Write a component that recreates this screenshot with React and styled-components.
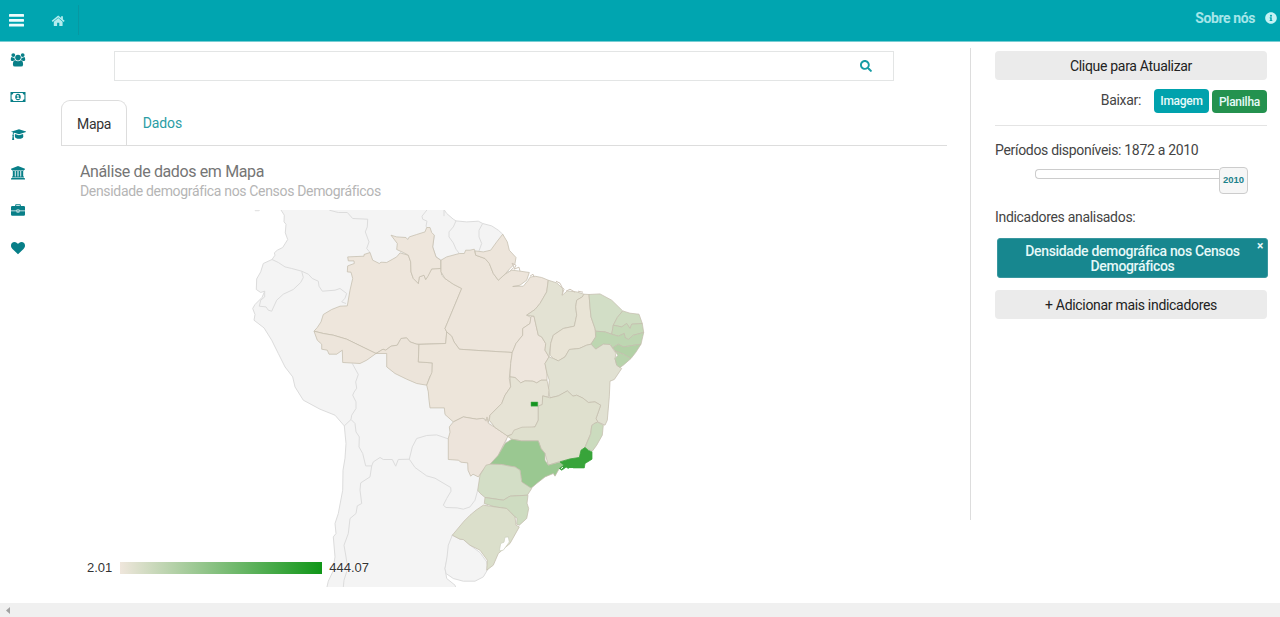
import React from 'react';
import styled, { createGlobalStyle } from 'styled-components';
import { FaInfoCircle, FaSearch } from 'react-icons/fa';

const GlobalStyle = createGlobalStyle`
  * { box-sizing: border-box; }
  body { margin: 0; background: #fff; font-family: Roboto, "Liberation Sans", sans-serif; font-size: 14px; letter-spacing: -0.31px; color: #444; overflow: hidden; }
  svg { display: block; }
`;

const Page = styled.div`
  height: 617px;
  display: flex;
  flex-direction: column;
`;
const Header = styled.header`
  height: 42px;
  flex: none;
  display: flex;
  align-items: flex-start;
  background: #00a5b0;
  border-bottom: 1px solid #79cdd3;
  color: #b4ecee;
`;
const MenuButton = styled.div`
  padding: 12px 0 0 8px;
  width: 50px;
  color: #effcfc;
`;
const HomeLink = styled.div`
  height: 30px;
  margin-top: 5px;
  padding-top: 8px;
  width: 29px;
  border-right: 1px solid #0798a2;
`;
const About = styled.div`
  margin-left: auto;
  display: flex;
  gap: 10px;
  padding: 10px 3px 0 0;
  font-weight: 700;
  line-height: 16px;
  letter-spacing: -0.4px;
  color: #a5e5e9;
  svg { margin-top: 2px; color: #c5f2f4; }
`;
const Body = styled.div`
  flex: 1;
  display: flex;
  min-height: 0;
`;
const Sidebar = styled.nav`
  width: 62px;
  flex: none;
  padding: 0 0 0 3px;
  margin-top: -1px;
  color: #087f88;
`;
const NavItem = styled.div`
  width: 30px;
  height: 37.6px;
  display: flex;
  align-items: center;
  justify-content: center;
`;
const Main = styled.main`
  width: 885px;
  flex: none;
  padding-top: 9px;
`;
const SearchBox = styled.div`
  margin: 0 53px 0 52px;
  height: 30px;
  border: 1px solid #e3e5e5;
  display: flex;
  align-items: center;
  justify-content: flex-end;
  padding-right: 21px;
  color: #159ca4;
`;
const Tabs = styled.div`
  display: flex;
  height: 46px;
  margin: 19px 0 0 -1px;
  border-bottom: 1px solid #ddd;
`;
const Tab = styled.div`
  height: 46px;
  line-height: ${(p) => (p.$active ? '46px' : '44px')};
  padding: 0 ${(p) => (p.$active ? '15px' : '14.5px')};
  letter-spacing: ${(p) => (p.$active ? '-0.3px' : '-0.1px')};
  color: ${(p) => (p.$active ? '#333' : '#2b9da5')};
  border: 1px solid ${(p) => (p.$active ? '#ddd' : 'transparent')};
  border-bottom: 0;
  border-radius: 9px 9px 0 0;
`;
const ChartTitle = styled.h1`
  margin: 16px 0 0 18px;
  font-size: 16px;
  font-weight: 400;
  line-height: 20px;
  letter-spacing: -0.37px;
  color: #757575;
`;
const ChartSubtitle = styled.h2`
  margin: 0 0 0 18px;
  font-size: 14px;
  font-weight: 400;
  line-height: 18px;
  letter-spacing: -0.33px;
  color: #b5b5b5;
`;
const MapArea = styled.div`
  margin-top: 10px;
  height: 377px;
  display: grid;
  > * { grid-area: 1 / 1; }
`;
const Legend = styled.div`
  align-self: end;
  justify-self: start;
  display: flex;
  align-items: center;
  gap: 7.5px;
  padding: 0 0 12px 25px;
  font: 13px/14px "Liberation Sans", Arial, sans-serif;
  letter-spacing: 0;
  color: #333;
  span { text-shadow: 0 0 2px #fff, 0 0 2px #fff; }
`;
const Gradient = styled.div`
  width: 202px;
  height: 12px;
  background: linear-gradient(90deg, #efe6dc, #109618);
`;
const Divider = styled.div`
  flex: none;
  width: 1px;
  height: 472px;
  margin: 6px 24px 0 23px;
  background: #ddd;
`;
const Panel = styled.aside`
  width: 272px;
  flex: none;
  padding-top: 9px;
`;
const WideButton = styled.div`
  height: 29px;
  border-radius: 4px;
  background: #ebebeb;
  color: #222;
  line-height: 30px;
  text-align: center;
`;
const Downloads = styled.div`
  display: flex;
  align-items: flex-start;
  justify-content: flex-end;
  height: 46px;
  padding-top: 9px;
  border-bottom: 1px solid #e4e4e4;
`;
const DownloadLabel = styled.span`
  line-height: 22px;
  margin-right: 13px;
`;
const SmallButton = styled.span`
  width: 55px;
  height: ${(p) => (p.$green ? '23px' : '24px')};
  margin: ${(p) => (p.$green ? '1px 0 0 3px' : '0')};
  border-radius: 4px;
  background: ${(p) => (p.$green ? '#24924f' : '#00a2ad')};
  color: #e8fafa;
  font-size: 12px;
  font-weight: 500;
  letter-spacing: -0.25px;
  line-height: 25px;
  text-align: center;
`;
const Label = styled.div`
  line-height: 18px;
  margin-top: ${(p) => p.$top}px;
`;
const Slider = styled.div`
  display: flex;
  align-items: flex-start;
  margin: 8px 19px 0 40px;
  height: 27px;
`;
const Track = styled.div`
  flex: 1;
  height: 10px;
  margin-top: 2px;
  border: 1px solid #ccc;
  border-right: 0;
  border-radius: 4px 0 0 4px;
`;
const Handle = styled.div`
  width: 29px;
  height: 27px;
  border: 1px solid #ccc;
  border-radius: 4px;
  background: #f6f6f6;
  font: bold 9.5px/24px "Liberation Sans", Arial, sans-serif;
  letter-spacing: 0;
  color: #1c828b;
  text-align: center;
`;
const Indicator = styled.div`
  position: relative;
  width: 271px;
  height: 40px;
  margin: 12px 0 12px 2px;
  padding: 5px 20px;
  border: 1px solid #38979f;
  border-radius: 3px;
  background: #17878f;
  color: #e6f8f8;
  font-weight: 500;
  line-height: 15px;
  letter-spacing: -0.34px;
  text-align: center;
`;
const Close = styled.span`
  position: absolute;
  top: 1px;
  right: 4px;
  font-size: 12px;
  font-weight: 700;
  line-height: 12px;
`;
const Scrollbar = styled.div`
  height: 14px;
  flex: none;
  padding: 4px 6px;
  background: #f0f0f0;
  color: #a2a2a2;
`;

const CONTINENT = `M280.7 209.3L284.3 215 284 221.7 286 224 285.3 232.7 287.7 239.3 282.7 247.3 277.3 250 274.3 252.7 275 255 272 259.3 263.3 263.3 260.7 271.7 256.7 278.7 256.3 289.3 260.7 292.3 264.7 291 262 297.3 255 304.3 252.7 308.3 255 314.3 254 320 264 327.7 271.7 340 278.3 353.3 285 366.7 292.7 376.7 295 386.7 303.3 400 320 409 335 415 344.3 425.7 346 443.3 345 458 343 470 342.7 490 338.3 513.3 335 523.3 336 533.3 333.3 536.7 335 556.7 332.7 571.7 328.3 581 326.7 588 456 588 455 585 446.7 578.3 445 568.3 452.3 535 480 520 500 480 520 350 502.7 234 498.3 230 491.7 225.7 482.7 223.3 478.3 221 466.7 221.7 456 220.7 453.3 219 446.7 213.3 444 209.3 444 205 280 205Z`;

const BORDERS = [
  'M329.3 210L338.3 212.3 347.3 212.3 352.7 218.3 367.7 219 367.3 226.7 365.3 231.7 369 241.7 366.7 248.3 370 252.3',
  'M427.3 209.3L422 216 422.7 219 427 221 426 226 428 228',
  'M434.3 235L432.7 246.7 436 256.7 441 260',
  'M444 208L444 216',
  'M456 220.7L453.3 226.7 449 231.7 449 236.7 453.3 242.7 456 249 459.3 253.3',
  'M482.7 223.3L479 230 479 236.7 481.7 243.3 479 250.7',
  'M272 259.3L278.3 262.3 285 266.7 291.7 268.3 301.7 271 303.3 277.3 300.7 282.3 293.3 289.3 283.3 294 276.7 300 271.7 311 268.3 310 266 306.7 259.3 306 260.7 300 264.7 296.7 264.7 291',
  'M301.7 271L308.3 274 312.3 278.3 318.3 281 319 286 322.3 291 335 290 340 288.3 346.7 293.3 345 298 341.7 301.7 346 303.3',
  'M352.3 363.3L358.3 374.3 355.7 381.7 356.7 388 354 392 352.7 395 356 401.7 356 408.3 351.7 415 351 419.3 344.3 425.7',
  'M351 419.3L355 423.3 356 431.7 359.3 436.7 359 446.7 362.7 453.3 365.7 465.7 371.7 465.7 373.3 461.7 380 457.3 383.3 459.3 392.3 459.3 395.7 466 398.3 459.3 409.3 459 412.3 446.7 416.7 438.3 426.7 435.3 436.7 434.7 448.3 438.7',
  'M409.3 459L415 467.3 426.7 475.7 435 478 450.7 487.3 451 491 446.7 498.3 443.3 505 446 507.3 457.3 507.7 463.3 509 470 506.7 475 500 477.7 490',
  'M371.7 465.7L370 476.7 360.7 482.7 360 490 361.7 503.3 357.3 505.7 356 513.3 350 518.3 348.3 533.3 344 545 346 556.7 347.7 568.3 344 580 343.3 587',
];

const URUGUAY = 'M452.3 535L448.3 545 447 557 445 568.3 446 573.3 453.3 578.3 463.3 581 475 581 483.3 576.7 488.3 568.3 486.7 561.7 480 552.3 470 545 463.3 539.3 460 539Z';

const STATES = [
  { id: 'AM', fill: '#eee6dc', d: 'M347.7 256.7L364 256 364 254.3 370 252.3 372.7 260 379.3 263.3 381 262 386.7 262.3 396.7 256.7 400 252.7 408.3 255 410.7 261.7 411 271.7 413.3 278.3 418.3 283.3 419.3 276.7 424 275 425.7 279.3 431.7 268.7 440.7 268.3 441.7 275 445 278.3 453.3 284 461.7 288.3 445 328.3 446.7 331.7 445.7 343.3 416.7 344 410 341.7 406.7 337.7 401 338.3 397.3 345 391 346 385.7 350 383 349 376 353.3 346.7 339 333.3 335 323.3 333.3 314 331 317.3 327.3 321 321.7 323.3 314.3 331.7 309.3 340 306 347.3 305.7 350 290 352.7 278.3 351 272 347.3 271.7 347.7 265.7 354.3 263.3 354 260.7 348.3 260.7Z' },
  { id: 'RR', fill: '#eee6dc', d: 'M391 235L396.7 236.7 406 237.3 407.7 239.3 409.3 236.7 416.7 234.3 425 231.7 426.7 227.3 430 227.3 431.7 232.3 434.3 235 432.7 246.7 436 256.7 440.7 260 440.7 268.3 431.7 268.7 428 276 425.7 279.3 424 275 419.3 276.7 418.3 283.3 413.3 278.3 411 271.7 410.7 261.7 408.3 255 403.3 252.3 396.7 249.3 397.3 243.3Z' },
  { id: 'PA', fill: '#ede5db', d: 'M441 260L446.7 256.7 459.3 253.3 464.3 253.3 465.7 250 470 250 474.3 249 475.7 255 485 258.3 489.3 263.3 493.3 273.3 498.3 280 505 274 511.7 270 518.3 270.7 529.3 272.3 526.7 280 520 285 512.7 286.3 523.3 286 528.3 280 530 277 535 276 541.7 277.3 548.3 280 546.7 291.7 540 303.3 535 309.3 526.7 315 531 317.3 530 323.3 522.7 328.3 522.7 335 516 343.3 512.3 352.3 473.3 350 459.3 349 454 341.7 451.7 336 446.7 331.7 445 328.3 461.7 288.3 453.3 284 445 278.3 441 271.7Z' },
  { id: 'AP', fill: '#ede5db', d: 'M475 250.7L483.3 251.7 490.7 250 496.7 241.7 502.7 234 507.3 241.7 509.3 250 516 257.3 515 263.3 510 268.3 505 274 498.3 280 493.3 273.3 489.3 263.3 485 258.3 475.7 255Z' },
  { id: 'AC', fill: '#ede5db', d: 'M314 331L317.3 340 321.7 344 321.7 349 327.3 350 329 354 336.7 354 342.3 350 342.7 362.3 360 363.3 366.7 360 376 353.3 346.7 339 333.3 335 323.3 333.3Z' },
  { id: 'RO', fill: '#ece4da', d: 'M376 353.3L386.7 353.3 386.7 366.7 395 373.3 406.7 379 416.7 383.3 426.7 385 430 376 432.3 373.3 432.3 362.7 418.3 361.7 419 344.3 416.7 344 410 341.7 406.7 337.7 401 338.3 397.3 345 391 346 385.7 350 383 349Z' },
  { id: 'MT', fill: '#ede5da', d: 'M419 344.3L418.3 361.7 432.3 362.7 432 372 430 376.7 426.7 385 428.3 391.7 429 400 430 407.7 444.3 407.7 445 414.3 453.3 421.7 463.3 416.7 476.7 419 484.3 418.3 486.7 420.7 488.3 422 490 415 501.7 403.3 505 395 510.7 386.7 509.3 378.3 510.7 363.3 512.3 352.3 473.3 350 459.3 349 454 341.7 451.7 336 446.7 331.7 445.7 343.3Z' },
  { id: 'MS', fill: '#ede4db', d: 'M453.3 421.7L449.3 426.7 450 432 448.3 438.3 448.3 459.3 458.3 460 461 462 467.7 462.7 468 470 470.7 476 473 474 478.3 476.7 483.3 469.3 490 464.3 498 456 501.7 448 508 436 495 427.3 488.3 423 487 416.7 486 421 483 418 476.7 419 463.3 416.7Z' },
  { id: 'TO', fill: '#eee6dd', d: 'M531 316L534 316 536 325 538.3 335 541.7 336.7 545.7 343.3 545 350 549 356.7 545 363.3 547 373.3 547 380 541 380 536.7 382.7 533 381 525 380.7 520.7 382.7 515 377.3 510 376.7 510.7 363.3 512.3 352.3 516 343.3 522.7 335 522.7 328.3 530 323.3Z' },
  { id: 'MA', fill: '#e3e2d3', d: 'M548.3 280L556.7 282.7 562.7 288.3 562.3 295 567.3 290.7 576.7 291.7 584 294 582.3 296.7 576.7 300 575.7 306.7 576.7 315 574.3 326 563.3 328.3 553.3 335 550.7 343.3 549 356.7 545 350 545.7 343.3 541.7 336.7 538.3 335 536 325 534 316 526.7 315 535 309.3 540 303.3 546.7 291.7Z' },
  { id: 'PI', fill: '#e9e4d6', d: 'M584 294L589 294.3 590 306.7 591 316.7 595 328.3 595.7 336.7 591 344 586.7 345 579.3 348.3 569.3 349.3 565 356.7 558.3 360.7 553.3 358.3 550 355 550.7 343.3 553.3 335 563.3 328.3 574.3 326 576.7 315 575.7 306.7 576.7 300 582.3 296.7Z' },
  { id: 'CE', fill: '#d2dec6', d: 'M589 294.3L600 293.7 611.7 300 622.7 310.7 617.3 317.3 613.3 325 611.7 334 605 331.7 595.7 331 595 328.3 591 316.7 590 306.7Z' },
  { id: 'RN', fill: '#cddcc0', d: 'M622.7 310.7L630 313 639 314 642.3 323.3 631.7 324 630 328.3 626.7 323.3 621.7 326.7 613.3 325 617.3 317.3Z' },
  { id: 'PB', fill: '#c5d9b8', d: 'M613.3 325L621.7 326.7 626.7 323.3 630 328.3 631.7 324 642.3 323.3 643.7 332.3 633.3 335 628.3 339.3 625 337.3 624.3 333.3 618.3 336 611.7 334Z' },
  { id: 'PE', fill: '#bdd6b1', d: 'M595.7 331L605 331.7 611.7 334 618.3 336 624.3 333.3 625 337.3 628.3 339.3 633.3 335 643.7 332.3 641 344 630 345.7 623.3 346.7 618.3 344 612.7 347.7 610 344.3 603.3 344 595.7 349 591 344 595.7 336.7Z' },
  { id: 'AL', fill: '#b2d1a6', d: 'M612.7 347.7L618.3 344 623.3 346.7 630 345.7 641 344 635.7 352.3 631 358.3 623.3 354 615 350.7Z' },
  { id: 'BA', fill: '#e1e1d2', d: 'M549 356.7L553.3 358.3 558.3 360.7 565 356.7 569.3 349.3 579.3 348.3 586.7 345 591 344 595.7 349 603.3 344 610 344.3 616 353.3 615 358.3 616.7 365 621.7 368.3 614.3 379.3 610 381 609.3 396.7 607.3 420 605 425 597.7 421.7 596 418.3 600.7 405 595 401.7 588.3 402.3 583 398 576.7 395 573 396 567.3 390.7 558.3 395.7 550 397.7 548.3 390 549.3 380 547 373.3 545 363.3Z' },
  { id: 'SE', fill: '#b7d3ab', d: 'M615 350.7L623.3 354 631 358.3 623.3 365 620 367.3 616.7 365 615 358.3 618 355Z' },
  { id: 'GO', fill: '#e6e3d5', d: 'M510 376.7L515 377.3 520.7 382.7 525 380.7 533 381 536.7 382.7 541 380 547 380 549 390 548.3 397 542.7 395.7 542.3 404.3 538.3 406 538.3 420 535 426.7 520 430 511.7 434.3 507.3 435.7 495 427.3 489.3 420 490 415 501.7 403.3 505 395 510.7 386.7Z' },
  { id: 'MG', fill: '#dfe0ce', d: 'M550 397.7L558.3 395.7 567.3 390.7 573 396 576.7 395 583 398 588.3 402.3 595 401.7 600.7 405 596 418.3 597.7 421.7 591.7 425 590.7 433.3 585 446.7 580 457.3 570 459 561.7 460.7 548.3 465 545 453.3 541 448.3 538.3 440.7 521.7 440.7 511.7 439 507.3 436 511.7 434.3 514 430 522 427 535 426.7 538.3 420 538.3 406 542.3 404.3 542.7 395.7Z' },
  { id: 'ES', fill: '#cbdbbe', d: 'M594 423.3L597.7 422 603.3 425 602.3 435 596.7 445 592.3 451 585 447.3 590.7 434 591.7 426Z' },
  { id: 'SP', fill: '#9ac891', d: 'M490 464L498.3 455 505 443.3 511.7 439 521.7 440.7 538.3 440.7 541 448.3 545 453.3 545 460 548.3 465 560 461.7 565 465 559.3 468.3 555 476 553.3 473.3 545 476.7 536.7 483.3 530 489 521.7 481.7 520 470 515 466.7 510 466 501.7 464.3Z' },
  { id: 'RJ', fill: '#38a43a', d: 'M585 447.3L588.3 450 592 451.7 592 459 585 463.3 584.3 467.7 573.3 467.7 568 468 566 467 561.7 470 559.3 468.3 564 465 560 461.7 570 458.7 579.3 457.3 581 450Z' },
  { id: 'PR', fill: '#d3dec6', d: 'M490 464L486 465 480 475 477.7 490 480 493 485 497.3 503.3 500 510 496 527.3 495 531.7 488.3 521.7 481.7 520 470 515 466.7 510 466 501.7 464.3Z' },
  { id: 'SC', fill: '#cedcc1', d: 'M485 497.3L484.3 503.3 495 506.7 506.7 508.3 515 516.7 517 518 516.7 524 519.3 525 526.7 518.3 528.7 508.3 527 503 528 495 510 496 503.3 500Z' },
  { id: 'RS', fill: '#dbdfcb', d: 'M452.3 535L464 521 470 515 476 510 483.3 505 495 506.7 506.7 508.3 515 516.7 516 525 519.3 526.7 510 543.3 498.3 553.3 493.3 565 486.7 570 487.3 560 480 550 470 545 463.3 539.3 460 539Z' },
];

const RegionMap = () => (
  <svg width="885" height="377" viewBox="62 209.8 885 377" strokeLinejoin="round" aria-label="Mapa">
    <g fill="#f4f4f4" stroke="#dcdcdc" strokeWidth="1">
      <path d={CONTINENT} />
      <path d="M254 208L262 208 259 211 255 211Z" stroke="none" fill="#e4e4e4" />
      {BORDERS.map((d) => <path key={d} d={d} fill="none" />)}
      <path d={URUGUAY} />
    </g>
    <g stroke="#c4bdae" strokeOpacity="0.75" strokeWidth="1">
      {STATES.map((s) => <path key={s.id} d={s.d} fill={s.fill} stroke={s.id === 'RJ' ? '#38a43a' : undefined} />)}
    </g>
    <path d="M510 271L514 267 512 263 516 265 514 269 519 267 520 271M530 276L533 274 534 277M556 281L560 283 562 287 564 289 562 295M566 291L570 289 575 292M578 291L583 292" fill="none" stroke="#cfc6b9" />
    <path d="M505 537L508.3 536.7 509.3 541.7 503.3 550 499.3 550.7 500.7 543.3 504 542Z" fill="#fff" stroke="#ccd0bd" strokeWidth=".7" />
    <path d="M561 468.5L563 467M564.5 469.5L567 467.8M569 468.4L573 468.4" stroke="#fff" strokeWidth="1" />
    <rect x="531" y="401.8" width="6.8" height="4.2" fill="#149420" stroke="#4fae55" strokeWidth=".5" />
  </svg>
);

const Glyph = ({ size = 16, children }) => (
  <svg width={size} height={size} viewBox="0 0 16 16" fill="currentColor">{children}</svg>
);

const Bars = () => (
  <Glyph>
    <rect x="1" y="2" width="15" height="2.8" rx=".6" />
    <rect x="1" y="6.9" width="15" height="2.8" rx=".6" />
    <rect x="1" y="11.8" width="15" height="2.8" rx=".6" />
  </Glyph>
);

const Home = () => (
  <Glyph>
    <path d="M8.2 5L12.6 8.7V12.4Q12.6 13 12 13H9.3V9.8H7.1V13H4.4Q3.8 13 3.8 12.4V8.7Z" />
    <path d="M2.2 8.4L8.2 3.4L14.2 8.4" fill="none" stroke="currentColor" strokeWidth="1.4" />
    <path d="M11.1 3.3H12.9V7L11.1 5.5Z" />
  </Glyph>
);

const Users = () => (
  <Glyph>
    <circle cx="3.3" cy="3.1" r="1.9" />
    <circle cx="12.7" cy="3.1" r="1.9" />
    <path d="M.8 8.1C.8 6 1.2 5 1.9 5.1Q3.3 6.1 4.4 5.5Q4.4 6.9 5.1 7.8Q4 7.9 3.3 8.9H1.8Q.8 8.9 .8 8.1Z" />
    <path d="M15.2 8.1C15.2 6 14.8 5 14.1 5.1Q12.7 6.1 11.6 5.5Q11.6 6.9 10.9 7.8Q12 7.9 12.7 8.9H14.2Q15.2 8.9 15.2 8.1Z" />
    <circle cx="8" cy="5.6" r="2.8" />
    <path d="M5.2 8.2Q8 10.2 10.8 8.2C12.4 8.3 13.1 10 13.1 12.4Q13.1 14.6 11 14.6H5Q2.9 14.6 2.9 12.4C2.9 10 3.6 8.3 5.2 8.2Z" />
  </Glyph>
);

const Money = () => (
  <Glyph>
    <path fillRule="evenodd" d="M.5 3H15.5V13H.5ZM3.4 4.1Q3.2 5.6 1.6 5.8V10.2Q3.2 10.4 3.4 11.9H12.6Q12.8 10.4 14.4 10.2V5.8Q12.8 5.6 12.6 4.1Z" />
    <path fillRule="evenodd" d="M8 4.7C11.7 4.7 11.7 11.3 8 11.3C4.3 11.3 4.3 4.7 8 4.7ZM7.6 5.9L6.5 6.8L7 7.4L7.5 7V9.1H6.6V10H9.5V9.1H8.6V5.9Z" />
  </Glyph>
);

const Graduation = () => (
  <Glyph>
    <path d="M9 2.2L17 4.7L9 7.2L4.4 5.8Q3.5 6.4 3.5 7.8Q4.3 8.3 3.7 9.2L4.2 13H2.1L2.6 9.2Q2 8.3 2.7 7.8Q2.7 6.2 3.3 5.4L1 4.7Z" />
    <path d="M4.9 6.9L9 8.2L13.1 6.9L13.3 9.8Q12.7 11.8 9.1 11.8Q5.5 11.8 4.9 9.8Z" />
  </Glyph>
);

const Bank = () => (
  <Glyph>
    <path d="M8 1L15 3.8V4.8H14V5.5H2V4.8H1V3.8Z" />
    <path d="M2.8 6.1H4.8V11.6H5.7V6.1H7.5V11.6H8.5V6.1H10.3V11.6H11.2V6.1H13.2V11.6H14V12.4H2V11.6H2.8Z" />
    <path d="M1.8 12.9H14.2L15 13.5V14.6H1V13.5Z" />
  </Glyph>
);

const Briefcase = () => (
  <Glyph>
    <path fillRule="evenodd" d="M5.2 4V3Q5.2 2.2 6 2.2H10Q10.8 2.2 10.8 3V4H13.8Q15 4 15 5.2V8.6H9.4V7.6H6.6V8.6H1V5.2Q1 4 2.2 4ZM6.2 4H9.8V3.2H6.2Z" />
    <path d="M1 9.3H6.6V10.4H9.4V9.3H15V12.6Q15 13.8 13.8 13.8H2.2Q1 13.8 1 12.6Z" />
    <rect x="7.3" y="8.2" width="1.4" height="1.4" />
  </Glyph>
);

const Heart = () => (
  <Glyph>
    <path d="M8 14.2L2.5 8.9C1.3 7.6 1 6.8 1 5.5C1 3.3 2.4 2.1 4.5 2.1C6.2 2.1 7.2 3.2 8 4C8.8 3.2 9.8 2.1 11.5 2.1C13.6 2.1 15 3.3 15 5.5C15 6.8 14.7 7.6 13.5 8.9Z" />
  </Glyph>
);

const NAV = [Users, Money, Graduation, Bank, Briefcase, Heart];

export default function App() {
  return (
    <>
      <GlobalStyle />
      <Page>
        <Header>
          <MenuButton><Bars /></MenuButton>
          <HomeLink><Home /></HomeLink>
          <About>Sobre nós <FaInfoCircle size={12} /></About>
        </Header>
        <Body>
          <Sidebar>
            {NAV.map((Icon, i) => <NavItem key={i}><Icon /></NavItem>)}
          </Sidebar>
          <Main>
            <SearchBox><FaSearch size={12} /></SearchBox>
            <Tabs>
              <Tab $active>Mapa</Tab>
              <Tab>Dados</Tab>
            </Tabs>
            <ChartTitle>Análise de dados em Mapa</ChartTitle>
            <ChartSubtitle>Densidade demográfica nos Censos Demográficos</ChartSubtitle>
            <MapArea>
              <RegionMap />
              <Legend><span>2.01</span><Gradient /><span>444.07</span></Legend>
            </MapArea>
          </Main>
          <Divider />
          <Panel>
            <WideButton>Clique para Atualizar</WideButton>
            <Downloads>
              <DownloadLabel>Baixar:</DownloadLabel>
              <SmallButton>Imagem</SmallButton>
              <SmallButton $green>Planilha</SmallButton>
            </Downloads>
            <Label $top={15}>Períodos disponíveis: 1872 a 2010</Label>
            <Slider><Track /><Handle>2010</Handle></Slider>
            <Label $top={14}>Indicadores analisados:</Label>
            <Indicator>
              Densidade demográfica nos Censos Demográficos
              <Close>×</Close>
            </Indicator>
            <WideButton>+ Adicionar mais indicadores</WideButton>
          </Panel>
        </Body>
        <Scrollbar>
          <svg width="4" height="7" viewBox="0 0 4 7"><path d="M4 0V7L0 3.5Z" fill="currentColor" /></svg>
        </Scrollbar>
      </Page>
    </>
  );
}
